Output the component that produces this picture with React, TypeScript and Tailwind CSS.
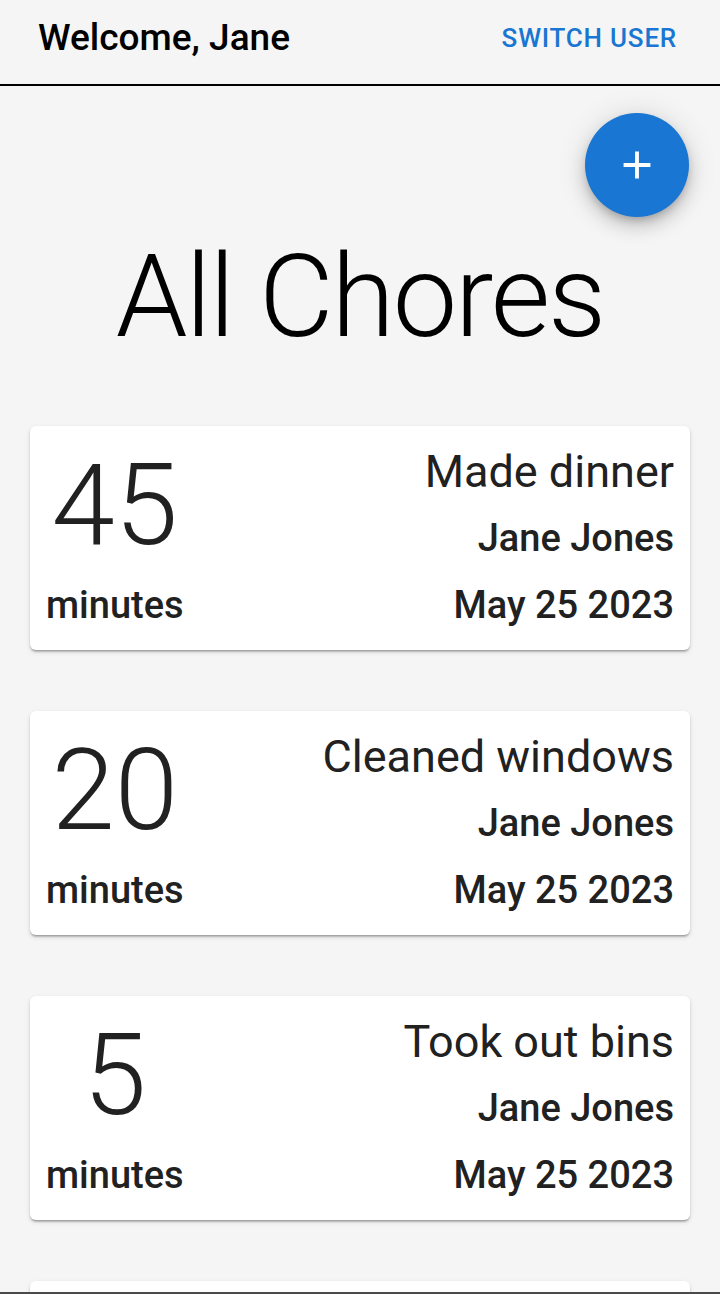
import React from "react";

type Chore = {
  minutes: number;
  title: string;
  user: string;
  date: string;
};

const chores: Chore[] = [
  { minutes: 45, title: "Made dinner", user: "Jane Jones", date: "May 25 2023" },
  { minutes: 20, title: "Cleaned windows", user: "Jane Jones", date: "May 25 2023" },
  { minutes: 5, title: "Took out bins", user: "Jane Jones", date: "May 25 2023" },
  { minutes: 30, title: "Did laundry", user: "Jane Jones", date: "May 24 2023" },
];

function ChoreCard({ minutes, title, user, date }: Chore) {
  return (
    <li className="flex justify-between rounded-[6px] bg-white px-4 pt-[12px] pb-[11px] text-[#212121] shadow-[0_3px_2px_-2px_rgba(0,0,0,0.2),0_2px_2px_0_rgba(0,0,0,0.14),0_2px_5px_0_rgba(0,0,0,0.12)]">
      <div className="flex flex-col items-center">
        <span className="text-[114px] font-light leading-[134px]">{minutes}</span>
        <span className="text-[38px] font-medium leading-[67px]">minutes</span>
      </div>
      <div className="flex flex-col items-end">
        <span className="text-[45px] leading-[67px]">{title}</span>
        <span className="text-[38px] font-medium leading-[67px]">{user}</span>
        <span className="text-[38px] font-medium leading-[67px]">{date}</span>
      </div>
    </li>
  );
}

export default function App() {
  return (
    <div className="min-h-screen bg-[#f5f5f5] font-['Roboto',sans-serif]">
      <header className="flex h-[86px] items-center justify-between border-b-2 border-black pb-[8px] pl-[38px] pr-[43px]">
        <h2 className="text-[37px] font-medium text-black">Welcome, Jane</h2>
        <button className="text-[26px] font-medium uppercase tracking-[0.03em] text-[#1976d2]">
          Switch user
        </button>
      </header>

      <main className="px-[30px] pt-[27px]">
        <div className="flex justify-end pr-[1px]">
          <button className="flex h-[104px] w-[104px] items-center justify-center rounded-full bg-[#1976d2] shadow-[0_5px_9px_-2px_rgba(0,0,0,0.2),0_10px_18px_0_rgba(0,0,0,0.14),0_2px_31px_0_rgba(0,0,0,0.12)]">
            <svg viewBox="0 0 24 24" className="h-[46px] w-[46px] fill-white">
              <path d="M19 13h-6v6h-2v-6H5v-2h6V5h2v6h6v2z" />
            </svg>
          </button>
        </div>

        <h1 className="mt-[13px] text-center text-[115px] font-light leading-[134px] tracking-[-0.018em] text-black">
          All Chores
        </h1>

        <ul className="mt-[62px] flex flex-col gap-[61px] pb-10">
          {chores.map((c) => (
            <ChoreCard key={c.title} {...c} />
          ))}
        </ul>
      </main>

      <div className="fixed inset-x-0 bottom-0 h-[2px] bg-[#4a4a4a]" />
    </div>
  );
}
